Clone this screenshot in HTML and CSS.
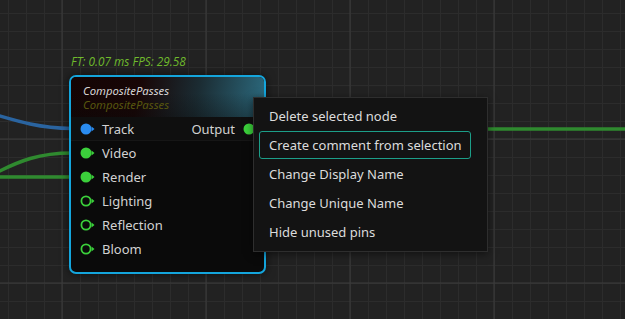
FILE: index.html
```html
<!DOCTYPE html>
<html>
<head>
<meta charset="utf-8">
<link rel="stylesheet" href="styles.css">
</head>
<body>
<div class="canvas">
  <svg class="wires" width="625" height="319" viewBox="0 0 625 319">
    <path d="M-10 113 C 20 122, 40 128, 72 128.5" stroke="#2a64a0" stroke-width="3.5" fill="none"/>
    <path d="M-10 176 C 20 160, 40 153, 72 153" stroke="#2f8a2f" stroke-width="3.5" fill="none"/>
    <path d="M-10 177 L 72 177" stroke="#2f8a2f" stroke-width="3.5" fill="none"/>
    <path d="M486 129 L 630 129" stroke="#2f8a2f" stroke-width="3.5" fill="none"/>
  </svg>

  <div class="stats">FT: 0.07 ms FPS: 29.58</div>

  <div class="node">
    <div class="node-header">
      <div class="node-title">CompositePasses</div>
      <div class="node-sub">CompositePasses</div>
    </div>
    <div class="node-body">
      <div class="row row-first">
        <span class="pin"><svg width="15" height="12" viewBox="0 0 15 12"><circle cx="6" cy="6" r="5.5" fill="#2a8cf0"/><path d="M11.5 3.5 L14.5 6 L11.5 8.5 Z" fill="#2a8cf0"/></svg></span>
        <span class="label">Track</span>
        <span class="spacer"></span>
        <span class="label">Output</span>
        <span class="pin out"><svg width="15" height="12" viewBox="0 0 15 12"><circle cx="6" cy="6" r="5.5" fill="#3bd03b"/><path d="M11.5 3.5 L14.5 6 L11.5 8.5 Z" fill="#3bd03b"/></svg></span>
      </div>
      <div class="row">
        <span class="pin"><svg width="15" height="12" viewBox="0 0 15 12"><circle cx="6" cy="6" r="5.5" fill="#3bd03b"/><path d="M11.5 3.5 L14.5 6 L11.5 8.5 Z" fill="#3bd03b"/></svg></span>
        <span class="label">Video</span>
      </div>
      <div class="row">
        <span class="pin"><svg width="15" height="12" viewBox="0 0 15 12"><circle cx="6" cy="6" r="5.5" fill="#3bd03b"/><path d="M11.5 3.5 L14.5 6 L11.5 8.5 Z" fill="#3bd03b"/></svg></span>
        <span class="label">Render</span>
      </div>
      <div class="row">
        <span class="pin"><svg width="15" height="12" viewBox="0 0 15 12"><circle cx="6" cy="6" r="4.6" fill="none" stroke="#3bd03b" stroke-width="1.8"/><path d="M11.5 3.5 L14.5 6 L11.5 8.5 Z" fill="#3bd03b"/></svg></span>
        <span class="label">Lighting</span>
      </div>
      <div class="row">
        <span class="pin"><svg width="15" height="12" viewBox="0 0 15 12"><circle cx="6" cy="6" r="4.6" fill="none" stroke="#3bd03b" stroke-width="1.8"/><path d="M11.5 3.5 L14.5 6 L11.5 8.5 Z" fill="#3bd03b"/></svg></span>
        <span class="label">Reflection</span>
      </div>
      <div class="row">
        <span class="pin"><svg width="15" height="12" viewBox="0 0 15 12"><circle cx="6" cy="6" r="4.6" fill="none" stroke="#3bd03b" stroke-width="1.8"/><path d="M11.5 3.5 L14.5 6 L11.5 8.5 Z" fill="#3bd03b"/></svg></span>
        <span class="label">Bloom</span>
      </div>
    </div>
  </div>

  <div class="menu">
    <div class="item">Delete selected node</div>
    <div class="item active">Create comment from selection</div>
    <div class="item">Change Display Name</div>
    <div class="item">Change Unique Name</div>
    <div class="item">Hide unused pins</div>
  </div>
</div>
</body>
</html>
```

FILE: styles.css
```css
html, body {
  margin: 0;
  padding: 0;
  background: #222222;
}

.canvas {
  position: relative;
  width: 625px;
  height: 319px;
  overflow: hidden;
  background-color: #222222;
  background-image:
    linear-gradient(to right, #3b3b3b 0, #3b3b3b 1.5px, transparent 1.5px),
    linear-gradient(to bottom, #3b3b3b 0, #3b3b3b 1.5px, transparent 1.5px),
    linear-gradient(to right, #2c2c2c 0, #2c2c2c 1px, transparent 1px),
    linear-gradient(to bottom, #2c2c2c 0, #2c2c2c 1px, transparent 1px);
  background-size: 144px 144px, 144px 144px, 18px 18px, 18px 18px;
  background-position: 61.5px 0, 0 138.5px, 8px 0, 0 13px;
  font-family: "Noto Sans", "Open Sans", sans-serif;
}

.wires {
  position: absolute;
  left: 0;
  top: 0;
}

.stats {
  position: absolute;
  left: 71px;
  top: 53px;
  font-family: "Open Sans", "Noto Sans", sans-serif;
  font-style: italic;
  font-size: 11.8px;
  line-height: 17px;
  color: #6fba2c;
}

.node {
  position: absolute;
  left: 69px;
  top: 75px;
  width: 193px;
  height: 195px;
  border: 2px solid #14a5dc;
  border-radius: 7px;
  background: #0a0a0a;
  box-shadow: 0 0 10px rgba(0, 0, 0, 0.6);
  overflow: hidden;
  display: flex;
  flex-direction: column;
}

.node-header {
  height: 40px;
  flex-shrink: 0;
  padding: 7px 12px 0 12px;
  box-sizing: border-box;
  background:
    linear-gradient(to bottom, rgba(10,10,10,0) 40%, rgba(10,10,10,0.35) 100%),
    linear-gradient(100deg, #140404 0%, #180606 35%, #1b2c33 65%, #2c6a7e 100%);
  font-style: italic;
  font-size: 11.3px;
  line-height: 14px;
}

.node-title {
  color: #d6d6d6;
}

.node-sub {
  color: #58560e;
}

.node-body {
  display: flex;
  flex-direction: column;
}

.row {
  height: 24px;
  flex-shrink: 0;
  display: flex;
  align-items: center;
  padding: 0 6px 0 9px;
  font-size: 13px;
  color: #d2d2d2;
}

.row-first {
  background: #0f0f0f;
  border-bottom: 1px solid #161616;
  height: 23px;
}

.pin {
  display: flex;
  width: 15px;
  height: 12px;
  margin-right: 7px;
}

.pin.out {
  margin-right: 0;
  margin-left: 8px;
}

.spacer {
  flex: 1;
}

.label {
  line-height: 16px;
}

.menu {
  position: absolute;
  left: 253px;
  top: 97px;
  width: 235px;
  height: 155px;
  box-sizing: border-box;
  background: #131313;
  border: 1px solid #2e2e2e;
  padding: 4px 16px 5px 5px;
  display: flex;
  flex-direction: column;
  align-items: flex-start;
  gap: 1px;
  box-shadow: 0 2px 8px rgba(0, 0, 0, 0.5);
}

.item {
  height: 28px;
  box-sizing: border-box;
  padding: 0 8px 0 9px;
  display: flex;
  align-items: center;
  font-size: 13px;
  color: #dcdcdc;
  border: 1.5px solid transparent;
  border-radius: 3px;
  white-space: nowrap;
}

.item.active {
  border-color: #1c9e88;
  align-self: stretch;
}
```
